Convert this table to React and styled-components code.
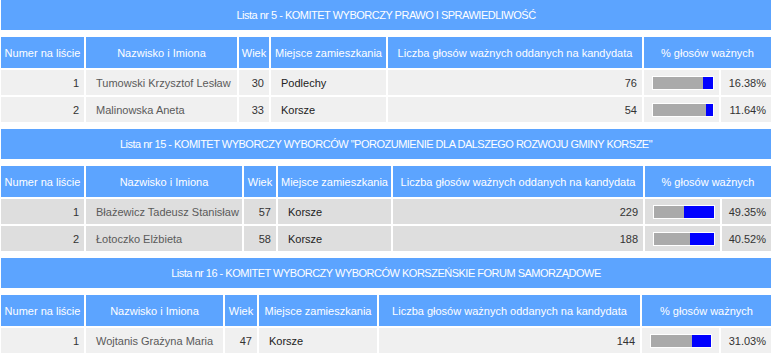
import React from "react";
import styled, { createGlobalStyle } from "styled-components";

const GlobalStyle = createGlobalStyle`
  html, body {
    margin: 0;
    padding: 0;
    overflow: hidden;
    background: #ffffff;
  }
  body {
    font-family: "Liberation Sans", Arial, sans-serif;
    font-size: 11px;
  }
`;

const Page = styled.div`
  width: 770px;
  padding-left: 1px;
`;

const Block = styled.section`
  display: flex;
  flex-direction: column;
`;

const Title = styled.div`
  height: 30px;
  display: flex;
  align-items: center;
  justify-content: center;
  background-color: #5ca4ff;
  color: #ffffff;
  letter-spacing: -0.5px;
`;

const Table = styled.table`
  table-layout: fixed;
  width: calc(100% + 4px);
  margin: 5px -2px 5px -2px;
  border-collapse: separate;
  border-spacing: 2px;
`;

const Col = styled.col`
  width: ${(p) => p.$w}px;
`;

const Head = styled.th`
  height: 31px;
  padding: 0 2px;
  background-color: #5ca4ff;
  color: #ffffff;
  font-weight: normal;
  text-align: center;
  white-space: nowrap;
  overflow: hidden;
`;

const Cell = styled.td`
  height: 25px;
  padding: 0 ${(p) => (p.$right ? "5px" : "0")} 0 ${(p) => (p.$right ? "0" : "10px")};
  background-color: ${(p) => p.$shade};
  color: ${(p) => p.$color || "#333333"};
  text-align: ${(p) => (p.$right ? "right" : "left")};
  white-space: nowrap;
  overflow: hidden;
  vertical-align: middle;
`;

const BarCell = styled.td`
  height: 25px;
  padding: 0 0 0 8px;
  background-color: ${(p) => p.$shade};
  vertical-align: middle;
`;

const Bar = styled.div`
  display: flex;
  justify-content: flex-end;
  width: 60px;
  height: 12px;
  border: 1px solid #ffffff;
  background-color: #aaaaaa;
`;

const Fill = styled.div`
  height: 100%;
  background-color: #0000ff;
`;

const lists = [
  {
    title: "Lista nr 5 - KOMITET WYBORCZY PRAWO I SPRAWIEDLIWOŚĆ",
    shade: "#f0f0f0",
    cols: [83, 151, 30, 115, 254, 75, 50],
    rows: [
      [1, "Tumowski Krzysztof Lesław", 30, "Podlechy", 76, 16.38],
      [2, "Malinowska Aneta", 33, "Korsze", 54, 11.64],
    ],
  },
  {
    title:
      'Lista nr 15 - KOMITET WYBORCZY WYBORCÓW "POROZUMIENIE DLA DALSZEGO ROZWOJU GMINY KORSZE"',
    shade: "#dedede",
    cols: [83, 156, 32, 113, 250, 75, 49],
    rows: [
      [1, "Błażewicz Tadeusz Stanisław", 57, "Korsze", 229, 49.35],
      [2, "Łotoczko Elżbieta", 58, "Korsze", 188, 40.52],
    ],
  },
  {
    title: "Lista nr 16 - KOMITET WYBORCZY WYBORCÓW KORSZEŃSKIE FORUM SAMORZĄDOWE",
    shade: "#f0f0f0",
    cols: [83, 137, 32, 118, 261, 77, 50],
    rows: [[1, "Wojtanis Grażyna Maria", 47, "Korsze", 144, 31.03]],
  },
];

function ListTable({ list }) {
  const s = list.shade;
  return (
    <Block>
      <Title>{list.title}</Title>
      <Table>
        <colgroup>
          {list.cols.map((w, i) => (
            <Col key={i} $w={w} />
          ))}
        </colgroup>
        <thead>
          <tr>
            <Head>Numer na liście</Head>
            <Head>Nazwisko i Imiona</Head>
            <Head>Wiek</Head>
            <Head>Miejsce zamieszkania</Head>
            <Head>Liczba głosów ważnych oddanych na kandydata</Head>
            <Head colSpan={2}>% głosów ważnych</Head>
          </tr>
        </thead>
        <tbody>
          {list.rows.map(([nr, name, age, place, votes, pct]) => (
            <tr key={nr}>
              <Cell $shade={s} $right>{nr}</Cell>
              <Cell $shade={s} $color="#5a5a5a">{name}</Cell>
              <Cell $shade={s} $right>{age}</Cell>
              <Cell $shade={s} $color="#222222">{place}</Cell>
              <Cell $shade={s} $right>{votes}</Cell>
              <BarCell $shade={s}>
                <Bar>
                  <Fill style={{ width: `${pct}%` }} />
                </Bar>
              </BarCell>
              <Cell $shade={s} $right>{pct.toFixed(2)}%</Cell>
            </tr>
          ))}
        </tbody>
      </Table>
    </Block>
  );
}

export default function App() {
  return (
    <Page>
      <GlobalStyle />
      {lists.map((l) => (
        <ListTable key={l.title} list={l} />
      ))}
    </Page>
  );
}
